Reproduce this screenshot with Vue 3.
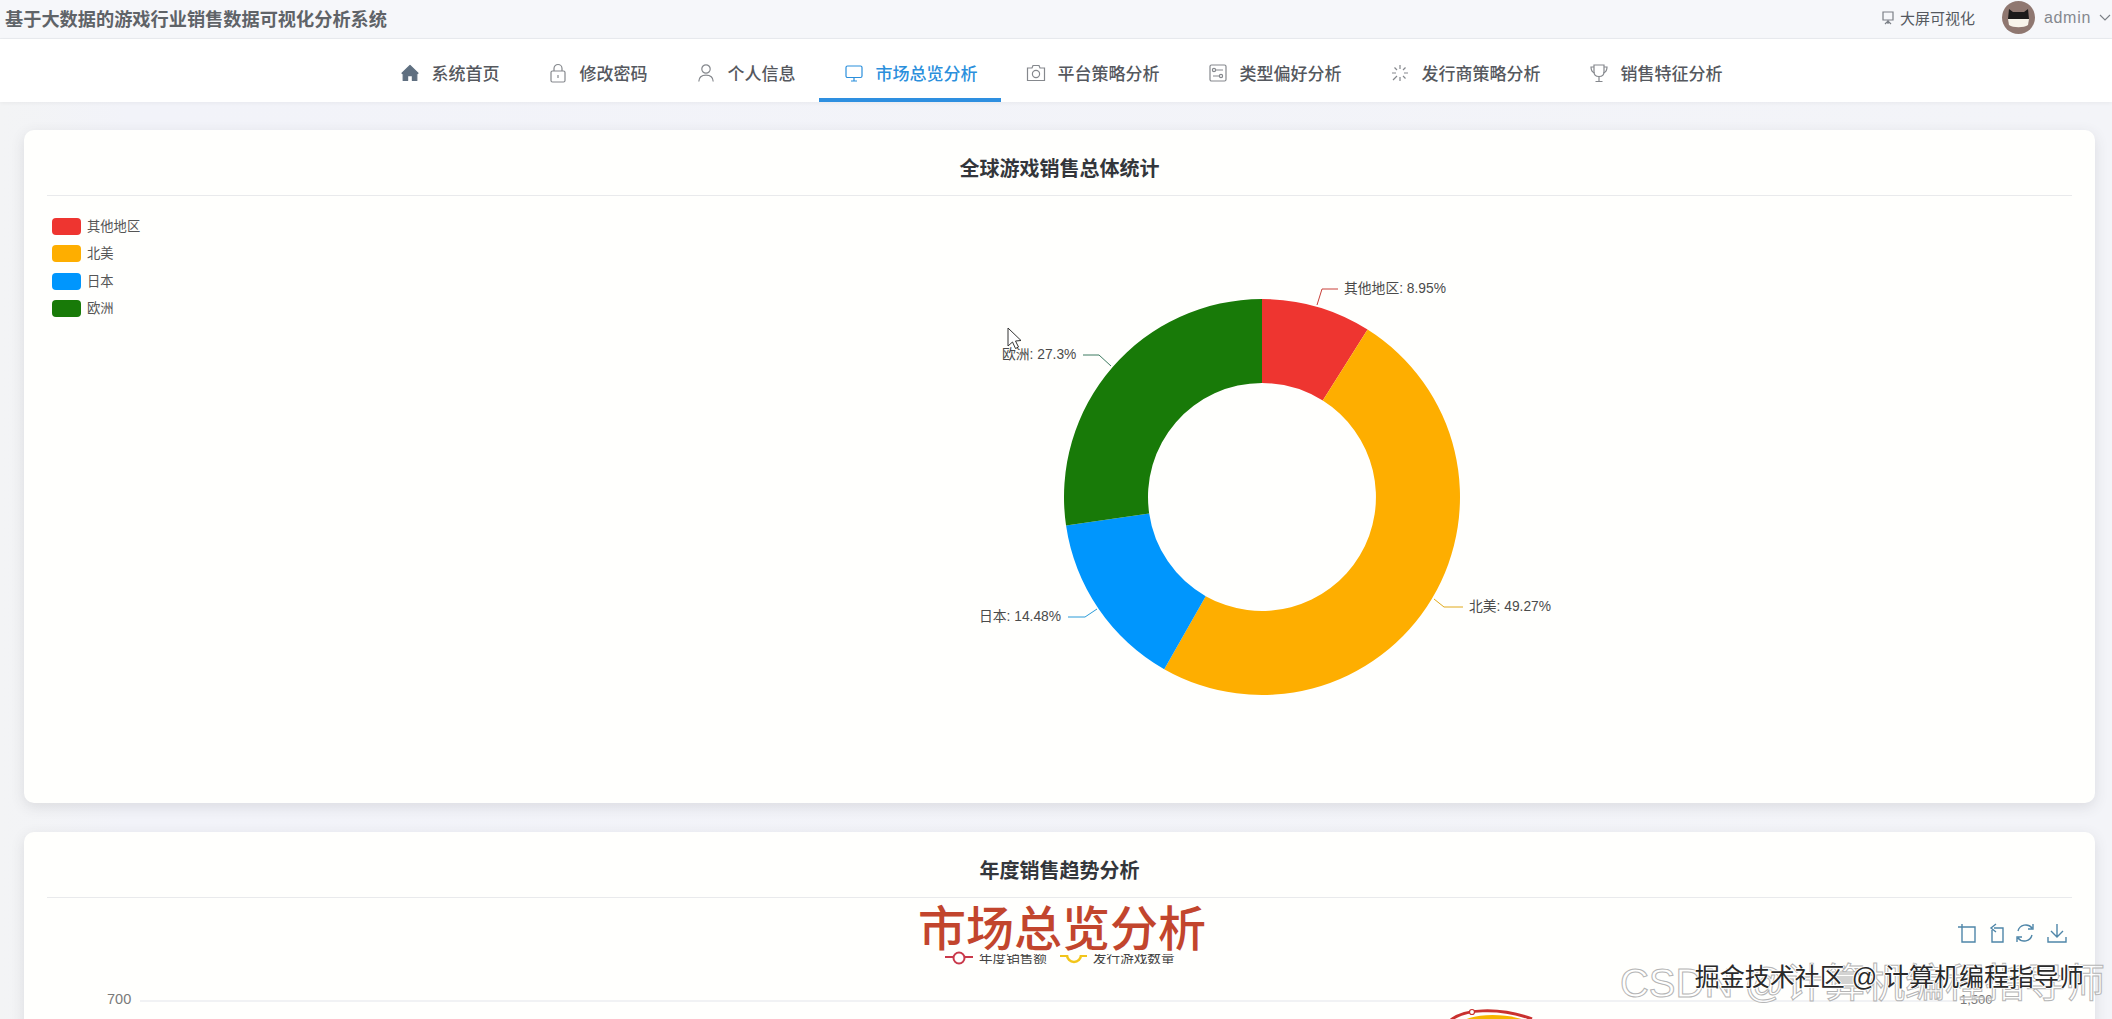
<script setup>
const navItems = [
  { name: "系统首页", icon: "home" },
  { name: "修改密码", icon: "lock" },
  { name: "个人信息", icon: "user" },
  { name: "市场总览分析", icon: "monitor", active: true },
  { name: "平台策略分析", icon: "camera" },
  { name: "类型偏好分析", icon: "sliders" },
  { name: "发行商策略分析", icon: "loading" },
  { name: "销售特征分析", icon: "trophy" },
];

const legend = [
  { name: "其他地区", color: "#ee3530" },
  { name: "北美", color: "#feae00" },
  { name: "日本", color: "#0096fd" },
  { name: "欧洲", color: "#187a08" },
];

// donut, in page coordinates
const cx = 1262;
const cy = 497;
const outer = 198;
const inner = 114;
const values = [8.95, 49.27, 14.48, 27.3];

function point(r, deg) {
  const a = ((deg - 90) * Math.PI) / 180;
  return (cx + r * Math.cos(a)).toFixed(2) + " " + (cy + r * Math.sin(a)).toFixed(2);
}

let start = 0;
const slices = values.map((v, i) => {
  const end = start + (v / 100) * 360;
  const large = end - start > 180 ? 1 : 0;
  const d =
    "M" + point(outer, start) +
    " A" + outer + " " + outer + " 0 " + large + " 1 " + point(outer, end) +
    " L" + point(inner, end) +
    " A" + inner + " " + inner + " 0 " + large + " 0 " + point(inner, start) + " Z";
  start = end;
  return { d, color: legend[i].color };
});

const labels = [
  { text: "其他地区: 8.95%", x: 1344, y: 288, line: "M1317 305 L1322 289 H1338", color: "#c9403a" },
  { text: "北美: 49.27%", x: 1469, y: 606, line: "M1434 599 L1444 607 H1463", color: "#e0a91a" },
  { text: "日本: 14.48%", x: 979, y: 616, line: "M1097 609 L1085 617 H1068", color: "#2a9bd8" },
  { text: "欧洲: 27.3%", x: 1002, y: 354, line: "M1111 366 L1099 355 H1083", color: "#3d7a60" },
];
</script>

<template>
  <div class="page">
    <header class="topbar">
      <div class="sys-title">基于大数据的游戏行业销售数据可视化分析系统</div>
      <div class="top-right">
        <div class="screen-link">
          <svg width="12" height="14" viewBox="0 0 12 14" fill="none" stroke="#7b7f86" stroke-width="1.2">
            <path d="M1 1H11V9H1Z" />
            <path d="M6 9V13M3 13L6 10L9 13" />
          </svg>
          <span>大屏可视化</span>
        </div>
        <svg class="avatar" width="33" height="33" viewBox="0 0 33 33">
          <circle cx="16.5" cy="16.5" r="16.5" fill="#8f7770" />
          <path d="M7 8L11 11H22L26 8L27 18H6Z" fill="#1c1a1a" />
          <path d="M6 18H27L26 24C22 27 11 27 7 24Z" fill="#f7f3ea" />
        </svg>
        <span class="admin">admin</span>
        <svg width="12" height="7" viewBox="0 0 12 7" fill="none" stroke="#7b7f86" stroke-width="1.1">
          <path d="M1 1L6 6L11 1" />
        </svg>
      </div>
    </header>

    <nav class="nav">
      <a v-for="item in navItems" :key="item.name" class="nav-item" :class="{ active: item.active }">
        <span class="nav-icon">
          <svg width="20" height="20" viewBox="0 0 20 20" fill="none" stroke="currentColor" stroke-width="1.2">
            <path v-if="item.icon === 'home'" d="M10 2.5L18 10.2L16.8 11V17.5H12.4V12.6H7.6V17.5H3.2V11L2 10.2Z" fill="#5f6f80" stroke="#5f6f80" stroke-linejoin="round" />
            <template v-if="item.icon === 'lock'">
              <rect x="3" y="8" width="14" height="11" rx="1.5" />
              <path d="M6 8V5.5C6 3.2 7.8 1.5 10 1.5S14 3.2 14 5.5V8" />
              <path d="M10 12V15" />
            </template>
            <template v-if="item.icon === 'user'">
              <circle cx="10" cy="6" r="4.2" />
              <path d="M2.8 18.5C3 14.5 6 12.2 10 12.2S17 14.5 17.2 18.5" />
            </template>
            <template v-if="item.icon === 'monitor'">
              <rect x="2" y="3" width="16" height="11.5" rx="1.5" />
              <path d="M7 18H13M10 14.5V18" />
            </template>
            <template v-if="item.icon === 'camera'">
              <path d="M1.5 5H6L7 2.5H13L14 5H18.5V17.5H1.5Z" />
              <circle cx="10" cy="11" r="3.6" />
            </template>
            <template v-if="item.icon === 'sliders'">
              <rect x="2" y="2" width="16" height="16" rx="1.5" />
              <path d="M8 7H15M5 13H11" />
              <circle cx="6" cy="7" r="1.6" />
              <circle cx="13" cy="13" r="1.6" />
            </template>
            <template v-if="item.icon === 'loading'">
              <path d="M10 2V6M10 14V18M2 10H6M14 10H18M4.5 4.5L7 7M13 13L15.5 15.5M15.5 4.5L13 7M7 13L3 17" />
            </template>
            <template v-if="item.icon === 'trophy'">
              <path d="M5 2H15V9C15 12 13 13.5 10 13.5S5 12 5 9Z" />
              <path d="M5 4H2C2 7.5 3 9 5.5 10M15 4H18C18 7.5 17 9 14.5 10" />
              <path d="M10 13.5V18.5M6.5 18.5H13.5" />
            </template>
          </svg>
        </span>
        <span>{{ item.name }}</span>
      </a>
    </nav>

    <main class="content">
      <section class="card first">
        <h2 class="card-title">全球游戏销售总体统计</h2>
        <div class="chart">
          <div class="legend">
            <div v-for="l in legend" :key="l.name" class="legend-row">
              <i class="swatch" :style="{ background: l.color }"></i>
              <span class="legend-text">{{ l.name }}</span>
            </div>
          </div>
          <svg class="canvas" width="2025" height="607" viewBox="47 196 2025 607">
            <path v-for="s in slices" :key="s.color" :d="s.d" :fill="s.color" />
            <g v-for="lb in labels" :key="lb.text">
              <path :d="lb.line" fill="none" :stroke="lb.color" stroke-width="1" />
              <text :x="lb.x" :y="lb.y + 5" class="pie-label">{{ lb.text }}</text>
            </g>
            <path d="M1008 328V346L1012.5 342L1015.5 348.5L1018.5 347L1015.5 341L1021 340.5Z" fill="#fff" stroke="#333" stroke-width="1" />
          </svg>
        </div>
      </section>

      <section class="card">
        <h2 class="card-title">年度销售趋势分析</h2>
        <div class="chart">
          <svg class="canvas" width="2025" height="200" viewBox="47 897 2025 200">
            <!-- toolbox -->
            <g fill="none" stroke="#4f86a8" stroke-width="1.4">
              <path d="M1958 926H1975V941H1962V923" />
              <path d="M1992 929V941H2003V927H1994M1996 923L1991 927L1996 931" />
              <path d="M2018 930A8 8 0 0 1 2032 927M2033 923V928H2028M2032 934A8 8 0 0 1 2018 937M2017 941V936H2022" />
              <path d="M2057 923V936M2051 930L2057 936L2063 930M2048 936V941H2066V936" />
            </g>
            <!-- legend markers -->
            <path d="M945 956H973" stroke="#c9384a" stroke-width="2" />
            <circle cx="959" cy="957" r="5.5" fill="#fff" stroke="#c9384a" stroke-width="2" />
            <path d="M1060 955H1068M1082 955H1087" stroke="#f2c51a" stroke-width="2" />
            <path d="M1067 954A7 7 0 0 0 1081 954" fill="none" stroke="#f2c51a" stroke-width="2.5" />
            <!-- axis -->
            <text x="107" y="1003" class="axis">700</text>
            <text x="1960" y="1003" class="axis small">1,500</text>
            <path d="M140 1000H1957" stroke="#e3e6ec" stroke-width="1.2" />
            <!-- clipped peak of the series -->
            <path d="M1448 1022C1460 1007 1500 1006 1532 1018" fill="none" stroke="#c9312f" stroke-width="3" />
            <circle cx="1472" cy="1011" r="2.5" fill="#fff" stroke="#c9312f" stroke-width="1.2" />
            <path d="M1460 1022C1470 1012 1510 1011 1532 1022Z" fill="#f7b500" />
          </svg>
          <div class="line-legend">
            <span class="ll-a">年度销售额</span>
            <span class="ll-b">发行游戏数量</span>
          </div>
          <div class="caption">市场总览分析</div>
        </div>
      </section>
    </main>

    <div class="mark-csdn">CSDN @计算机编程指导师</div>
    <div class="mark-juejin">掘金技术社区 @ 计算机编程指导师</div>
  </div>
</template>

<style scoped>
.page {
  position: relative;
  height: 1019px;
  width: 2112px;
  overflow: hidden;
  display: flex;
  flex-direction: column;
  background: linear-gradient(90deg, #f3f4f5, #f2f3f9 6%, #f3f4f8);
  font-family: "Liberation Sans", "Noto Sans CJK SC", sans-serif;
}
.topbar {
  flex: none;
  height: 39px;
  box-sizing: border-box;
  padding: 0 1px 3px 5px;
  display: flex;
  align-items: center;
  justify-content: space-between;
  background: #f6f7fa;
  border-bottom: 1px solid #eaecf0;
}
.sys-title {
  font-size: 18.2px;
  font-weight: 700;
  color: #5f6368;
}
.top-right {
  display: flex;
  align-items: center;
}
.screen-link {
  display: flex;
  align-items: center;
  gap: 6px;
  margin-right: 27px;
  font-size: 15px;
  color: #55595f;
}
.avatar {
  margin-right: 9px;
}
.admin {
  font-size: 16px;
  letter-spacing: 0.7px;
  color: #85888e;
  margin-right: 8px;
}
.nav {
  flex: none;
  height: 63px;
  box-sizing: border-box;
  padding-left: 8px;
  display: flex;
  justify-content: center;
  background: #fff;
  box-shadow: 0 1px 4px rgba(0, 0, 0, 0.05);
}
.nav-item {
  box-sizing: border-box;
  display: flex;
  align-items: center;
  padding: 8px 23px 0;
  font-size: 17px;
  font-weight: 500;
  color: #55585e;
  border-bottom: 4px solid transparent;
}
.nav-item.active {
  color: #2b8fdc;
  border-bottom-color: #2e8fe0;
}
.nav-icon {
  width: 24px;
  margin-right: 10px;
  display: flex;
  justify-content: center;
  color: #85888d;
}
.active .nav-icon {
  color: #2b8fdc;
}
.content {
  flex: 1;
  min-height: 0;
  padding: 28px 17px 0 24px;
  display: flex;
  flex-direction: column;
  gap: 29px;
}
.card {
  flex: none;
  padding: 0 23px;
  background: #fffffd;
  border-radius: 10px;
  box-shadow: 0 4px 14px rgba(60, 60, 70, 0.13);
}
.card.first {
  height: 673px;
}
.card-title {
  margin: 0;
  height: 66px;
  box-sizing: border-box;
  padding-top: 9px;
  display: flex;
  align-items: center;
  justify-content: center;
  font-size: 20px;
  font-weight: 700;
  color: #33363b;
  border-bottom: 1px solid #e9eaec;
}
.chart {
  position: relative;
  height: 607px;
}
.canvas {
  position: absolute;
  left: 0;
  top: 0;
}
.legend {
  position: absolute;
  z-index: 1;
  left: 5px;
  top: 22px;
  display: flex;
  flex-direction: column;
  gap: 10.3px;
  font-size: 13.3px;
  color: #555;
}
.legend-row {
  display: flex;
  align-items: center;
  gap: 6px;
  height: 17px;
}
.legend-text {
  padding-bottom: 2px;
}
.swatch {
  width: 29px;
  height: 17px;
  border-radius: 4px;
}
.pie-label {
  font-size: 13.8px;
  fill: #4b4b4b;
}
.axis {
  font-size: 14.5px;
  fill: #7a7a7a;
}
.axis.small {
  font-size: 13px;
}
.line-legend {
  position: absolute;
  top: 56px;
  left: 0;
  width: 100%;
  height: 10px;
  overflow: hidden;
  font-size: 13.6px;
  line-height: 10px;
  color: #444;
}
.ll-a {
  position: absolute;
  left: 932px;
}
.ll-b {
  position: absolute;
  left: 1046px;
}
.caption {
  position: absolute;
  top: 2px;
  left: 871px;
  font-size: 48px;
  line-height: 60px;
  font-weight: 500;
  white-space: nowrap;
  color: #c2452d;
}
.mark-csdn {
  position: absolute;
  right: 7px;
  top: 960px;
  font-size: 40px;
  line-height: 46px;
  white-space: nowrap;
  color: rgba(255, 255, 255, 0.55);
  -webkit-text-stroke: 1px #b5b5b5;
}
.mark-juejin {
  position: absolute;
  right: 28px;
  top: 961px;
  font-size: 25px;
  line-height: 32px;
  white-space: nowrap;
  color: #2a2a2a;
  text-shadow: 1px 0 0 #fff, -1px 0 0 #fff, 0 1px 0 #fff, 0 -1px 0 #fff;
}
</style>
